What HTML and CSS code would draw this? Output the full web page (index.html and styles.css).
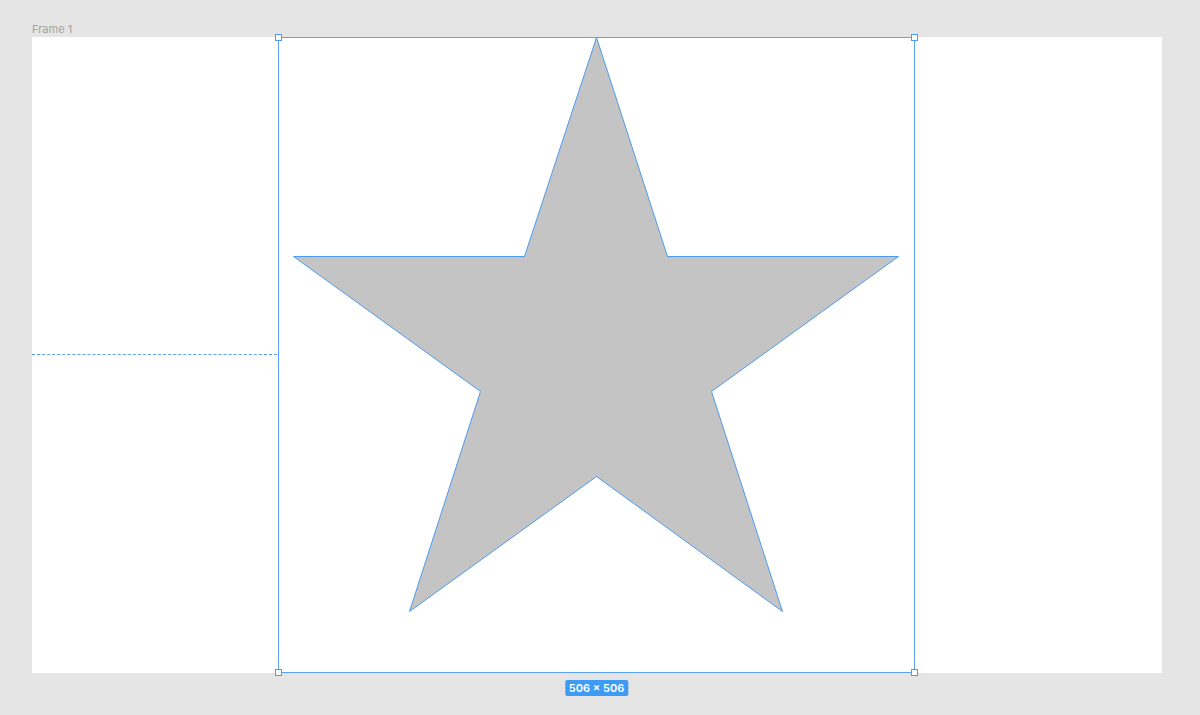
FILE: index.html
```html
<!DOCTYPE html>
<html>
<head>
<meta charset="utf-8">
<link rel="stylesheet" href="styles.css">
</head>
<body>
<div class="canvas">
  <div class="frame-label">Frame 1</div>
  <div class="frame">
    <div class="guide"></div>
    <div class="selection">
      <svg class="star" width="637" height="636" viewBox="0 0 637 636">
        <polygon points="318.5,0.5 389.5,219.5 620.5,219.5 433.5,354.5 504.5,574.5 318.5,439.5 131.5,574.5 202.5,354.5 15.5,219.5 246.5,219.5" fill="#c4c4c4" stroke="#4d9bf0" stroke-width="1"/>
      </svg>
      <span class="handle tl"></span>
      <span class="handle tr"></span>
      <span class="handle bl"></span>
      <span class="handle br"></span>
      <span class="size-badge">506 × 506</span>
    </div>
  </div>
</div>
</body>
</html>
```
FILE: styles.css
```css
html, body {
  margin: 0;
  padding: 0;
  background: #e5e5e5;
  width: 1200px;
  height: 715px;
  overflow: hidden;
  font-family: Inter, "Liberation Sans", sans-serif;
}
.canvas {
  padding: 22px 0 0 32px;
  display: flex;
  flex-direction: column;
}
.frame-label {
  font-size: 11px;
  line-height: 15px;
  color: #a3a3a3;
}
.frame {
  position: relative;
  width: 1130px;
  height: 636px;
  background: #ffffff;
}
.guide {
  position: absolute;
  left: 0;
  top: 317px;
  width: 245px;
  border-top: 1px dashed #5aa3f2;
}
.selection {
  position: absolute;
  left: 246px;
  top: 0;
  width: 635px;
  height: 634px;
  border: 1px solid #5aa3f2;
}
.star {
  position: absolute;
  left: -1px;
  top: -1px;
  display: block;
}
.handle {
  position: absolute;
  width: 5px;
  height: 5px;
  background: #ffffff;
  border: 1px solid #4d9bf0;
}
.handle.tl { left: -4px; top: -4px; }
.handle.tr { right: -4px; top: -4px; }
.handle.bl { left: -4px; bottom: -4px; }
.handle.br { right: -4px; bottom: -4px; }
.size-badge {
  position: absolute;
  left: 50%;
  transform: translateX(-50%);
  bottom: -24px;
  background: #3d9bf5;
  color: #ffffff;
  font-size: 11px;
  font-weight: 600;
  line-height: 16px;
  padding: 0 4px;
  border-radius: 2px;
  white-space: nowrap;
}
```
